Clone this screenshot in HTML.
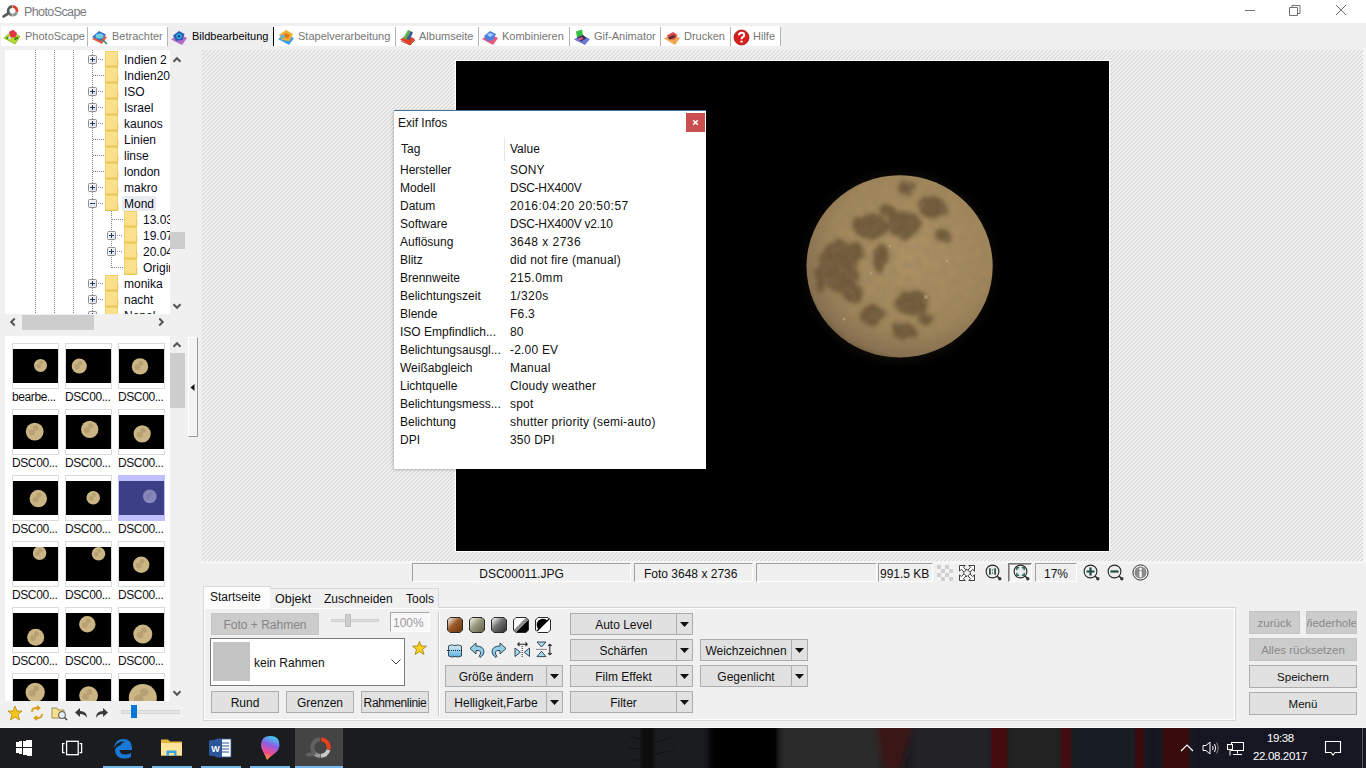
<!DOCTYPE html><html><head><meta charset="utf-8"><style>

*{margin:0;padding:0;box-sizing:border-box}
html,body{width:1366px;height:768px;overflow:hidden;background:#f0f0f0;font-family:"Liberation Sans",sans-serif;color:#000}
div,svg{position:absolute}
.t{white-space:nowrap;font-size:12px;line-height:14px}
.btn{background:#e1e1e1;border:1px solid #adadad}
.btnd{background:#cccccc;border:1px solid #bfbfbf}
.cen{text-align:center}

</style></head><body>
<div style="left:0px;top:0px;width:1366px;height:23px;background:#fff"></div><svg style="left:0;top:0" width="22" height="22" viewBox="0 0 22 22"><path d="M12.65 6.30 A4.4 4.4 0 0 1 16.75 11.84" stroke="#e23a22" stroke-width="2.7" fill="none"/><path d="M16.68 12.06 A4.4 4.4 0 0 1 12.65 15.10" stroke="#8c9690" stroke-width="2.7" fill="none"/><path d="M12.35 15.10 A4.4 4.4 0 0 1 8.69 12.90" stroke="#808080" stroke-width="2.7" fill="none"/><path d="M8.69 12.90 A4.4 4.4 0 0 1 12.35 6.30" stroke="#575b5a" stroke-width="2.7" fill="none"/><path d="M8.6 13.2 L3.6 16.4" stroke="#575b5a" stroke-width="2.8" stroke-linecap="round" fill="none"/></svg><div class="t" style="left:24px;top:5px;font-size:12.5px;color:#7a7a82;line-height:14px;letter-spacing:-0.6px">PhotoScape</div><div style="left:1245px;top:10px;width:10px;height:1px;background:#707070"></div><svg style="left:1289px;top:4px" width="12" height="12" viewBox="0 0 12 12"><path d="M0.5 3.5h8v8h-8z M3 3.5V1.5h8v8H8.5" stroke="#707070" fill="none" stroke-width="1"/></svg><svg style="left:1335px;top:4px" width="12" height="12" viewBox="0 0 12 12"><path d="M1 1L11 11M11 1L1 11" stroke="#707070" fill="none" stroke-width="1"/></svg>
<div style="left:1px;top:26px;width:779px;height:20px;background:#fff"></div><div style="left:168px;top:26px;width:105px;height:20px;background:#eeeeee"></div><div class="t" style="left:25px;top:30px;font-size:11px;color:#767676;line-height:13px">PhotoScape</div><div style="left:87px;top:27px;width:1px;height:19px;background:#b4b4b4"></div><svg style="left:3px;top:29px" width="18" height="17" viewBox="0 0 18 17"><path d="M1 9 L8 3 L17 7.5 L12 15 Z" fill="#b9d92e" stroke="#86b01c" stroke-width="0.8"/><path d="M3.5 9.5 L6 8 M11.5 10.5 L15 8.5" stroke="#2c7a1a" stroke-width="1.6"/><path d="M6 3 L10 0.8 L14 4 L12.5 8.5 L7.5 8.5 Z" fill="#e23446"/><path d="M5 8 L7 7 L8 9.5 L6 10.5Z" fill="#d8e8f0"/></svg><div class="t" style="left:112px;top:30px;font-size:11px;color:#767676;line-height:13px">Betrachter</div><div style="left:167px;top:27px;width:1px;height:19px;background:#b4b4b4"></div><svg style="left:91px;top:29px" width="18" height="17" viewBox="0 0 18 17"><path d="M1 10 L8 4.5 L16 8 L11 15Z" fill="#e8603a"/><path d="M1 8 L8 2 L15 5.5 L10 12Z" fill="#3a70c8"/><ellipse cx="8.5" cy="7" rx="4" ry="2.6" fill="#6ad0e0"/><path d="M12 11 L16 15" stroke="#2a8a8a" stroke-width="1.6"/></svg><div class="t" style="left:192px;top:30px;font-size:11px;color:#000;line-height:13px">Bildbearbeitung</div><div style="left:273px;top:27px;width:1px;height:19px;background:#000"></div><svg style="left:170px;top:29px" width="18" height="17" viewBox="0 0 18 17"><path d="M1 10.5 L9 5 L17 9 L12 16Z" fill="#b86ac8"/><path d="M3 6.5 L9 2 L14.5 5 L12.5 11 L6 12Z" fill="#2a5fb0"/><circle cx="9" cy="7.2" r="2.7" fill="#2eb0e8"/><circle cx="9" cy="7.2" r="1.2" fill="#163a70"/></svg><div class="t" style="left:298px;top:30px;font-size:11px;color:#767676;line-height:13px">Stapelverarbeitung</div><div style="left:395px;top:27px;width:1px;height:19px;background:#b4b4b4"></div><svg style="left:277px;top:29px" width="18" height="17" viewBox="0 0 18 17"><path d="M1 10 L8 5 L17 9 L12 16Z" fill="#3aa0e0"/><path d="M2 6 L9 1 L16 5 L12.5 12 L5 11Z" fill="#f0b030"/><path d="M8 4 L13 6 L11 9.5 L6.5 8Z" fill="#e07818"/><path d="M3 7 L6 5 L8 8 L5 10Z" fill="#58b8e8"/></svg><div class="t" style="left:419px;top:30px;font-size:11px;color:#767676;line-height:13px">Albumseite</div><div style="left:478px;top:27px;width:1px;height:19px;background:#b4b4b4"></div><svg style="left:399px;top:29px" width="18" height="17" viewBox="0 0 18 17"><path d="M1 10.5 L8 6 L16 10 L11 16Z" fill="#e0402a"/><path d="M4 9.5 L9 1 L11.5 2 L7.5 10.5Z" fill="#58b048"/><path d="M7.5 10 L11.5 2 L14 3.5 L10.5 11Z" fill="#3a5a90"/><path d="M2 12 L11 16 L16 11" stroke="#a02818" stroke-width="0.8" fill="none"/></svg><div class="t" style="left:502px;top:30px;font-size:11px;color:#767676;line-height:13px">Kombinieren</div><div style="left:569px;top:27px;width:1px;height:19px;background:#b4b4b4"></div><svg style="left:481px;top:29px" width="18" height="17" viewBox="0 0 18 17"><path d="M1 10 L9 5 L17 9 L12 16Z" fill="#e8587a"/><path d="M3 7 L9 2 L15 5 L12 11 L6 12Z" fill="#4f7fe0"/><path d="M6 6 L9 4 L12.5 5.5 L9.5 8Z" fill="#a8d0f8"/></svg><div class="t" style="left:594px;top:30px;font-size:11px;color:#767676;line-height:13px">Gif-Animator</div><div style="left:660px;top:27px;width:1px;height:19px;background:#b4b4b4"></div><svg style="left:573px;top:29px" width="18" height="17" viewBox="0 0 18 17"><path d="M1 10.5 L8 6 L17 10 L12 16Z" fill="#6a78d8"/><path d="M3 2.5 L9 0.5 L10 6.5 L4 8.5Z" fill="#30c040"/><path d="M4 8.5 L10 6 L13.5 9 L8 12.5Z" fill="#303040"/><path d="M5 9.5 L9 8 L10.5 10 L6.5 11.5Z" fill="#e050a0"/></svg><div class="t" style="left:684px;top:30px;font-size:11px;color:#767676;line-height:13px">Drucken</div><div style="left:730px;top:27px;width:1px;height:19px;background:#b4b4b4"></div><svg style="left:663px;top:29px" width="18" height="17" viewBox="0 0 18 17"><path d="M1 9.5 L9 5 L17 9 L12 16Z" fill="#f0a858"/><path d="M4 6.5 L10 3 L14.5 6 L11.5 10.5 L6 10.5Z" fill="#d84848"/><path d="M5 8.5 L11 6 L12.5 8 L7 10.5Z" fill="#503030"/></svg><div class="t" style="left:753px;top:30px;font-size:11px;color:#767676;line-height:13px">Hilfe</div><div style="left:780px;top:27px;width:1px;height:19px;background:#b4b4b4"></div><svg style="left:733px;top:29px" width="18" height="17" viewBox="0 0 18 17"><circle cx="8.5" cy="8.5" r="7.5" fill="#d8201c"/><circle cx="8.5" cy="8.5" r="7.5" fill="none" stroke="#a01010" stroke-width="0.8"/><path d="M6 6.3 Q6 3.8 8.6 3.8 Q11.2 3.8 11.2 6.1 Q11.2 7.6 9.4 8.4 Q8.6 8.9 8.6 10.2" stroke="#fff" stroke-width="2" fill="none"/><circle cx="8.6" cy="12.6" r="1.2" fill="#fff"/></svg>
<svg style="left:200px;top:48px" width="1166" height="518" viewBox="0 0 1166 518" shape-rendering="crispEdges"><defs><pattern id="hp" patternUnits="userSpaceOnUse" width="4" height="4"><rect x="0" y="0" width="1" height="1" fill="#d9d9d9"/><rect x="1" y="0" width="1" height="1" fill="#e2e2e2"/><rect x="2" y="0" width="1" height="1" fill="#f3f3f3"/><rect x="3" y="0" width="1" height="1" fill="#f1f1f1"/><rect x="0" y="1" width="1" height="1" fill="#e2e2e2"/><rect x="1" y="1" width="1" height="1" fill="#f3f3f3"/><rect x="2" y="1" width="1" height="1" fill="#f1f1f1"/><rect x="3" y="1" width="1" height="1" fill="#d9d9d9"/><rect x="0" y="2" width="1" height="1" fill="#f3f3f3"/><rect x="1" y="2" width="1" height="1" fill="#f1f1f1"/><rect x="2" y="2" width="1" height="1" fill="#d9d9d9"/><rect x="3" y="2" width="1" height="1" fill="#e2e2e2"/><rect x="0" y="3" width="1" height="1" fill="#f1f1f1"/><rect x="1" y="3" width="1" height="1" fill="#d9d9d9"/><rect x="2" y="3" width="1" height="1" fill="#e2e2e2"/><rect x="3" y="3" width="1" height="1" fill="#f3f3f3"/></pattern></defs><rect x="1163" y="0" width="3" height="518" fill="#f5f5f5"/><rect x="0" y="513" width="1166" height="3" fill="#f5f5f5"/><rect width="1163" height="513" fill="url(#hp)"/><rect x="0" y="0" width="1163" height="2" fill="#f0f0f0" fill-opacity="0.75"/><rect x="0" y="2" width="2" height="511" fill="#f0f0f0" fill-opacity="0.75"/></svg>
<div style="left:5px;top:50px;width:165px;height:264px;background:#fff;overflow:hidden"><div style="left:30px;top:0px;width:1px;height:264px;background-image:repeating-linear-gradient(to bottom,#808080 0 1px,transparent 1px 2px)"></div><div style="left:49px;top:0px;width:1px;height:264px;background-image:repeating-linear-gradient(to bottom,#808080 0 1px,transparent 1px 2px)"></div><div style="left:68px;top:0px;width:1px;height:264px;background-image:repeating-linear-gradient(to bottom,#808080 0 1px,transparent 1px 2px)"></div><div style="left:87px;top:0px;width:1px;height:264px;background-image:repeating-linear-gradient(to bottom,#808080 0 1px,transparent 1px 2px)"></div><div style="left:106px;top:161px;width:1px;height:57px;background-image:repeating-linear-gradient(to bottom,#808080 0 1px,transparent 1px 2px)"></div><div style="left:93px;top:9px;width:6px;height:1px;background-image:repeating-linear-gradient(to right,#808080 0 1px,transparent 1px 2px)"></div><svg style="left:100px;top:1px" width="14" height="16" viewBox="0 0 14 16"><rect x="0.5" y="0.5" width="12" height="15" fill="#fde595" stroke="#f1d06a" stroke-width="1"/><rect x="1.5" y="1.5" width="10" height="13" fill="#fbe08c"/><rect x="0" y="14.5" width="12.5" height="1.5" fill="#e8c558"/><path d="M11.5 9 L13 9 L13 15 L11.5 15" fill="#f6d877" stroke="#e6c25a" stroke-width="0.8"/></svg><div class="t" style="left:119px;top:3px;font-size:12px;color:#0a0a18">Indien 2</div><svg style="left:83px;top:5px" width="9" height="9" viewBox="0 0 9 9"><defs><linearGradient id="pg" x1="0" y1="0" x2="1" y2="1"><stop offset="0" stop-color="#fff"/><stop offset="1" stop-color="#d6dbe6"/></linearGradient></defs><rect x="0.5" y="0.5" width="8" height="8" rx="1" fill="url(#pg)" stroke="#8e8f8f"/><path d="M2 4.5h5" stroke="#1f3a5a" stroke-width="1"/><path d="M4.5 2v5" stroke="#1f3a5a" stroke-width="1"/></svg><div style="left:88px;top:25px;width:11px;height:1px;background-image:repeating-linear-gradient(to right,#808080 0 1px,transparent 1px 2px)"></div><svg style="left:100px;top:17px" width="14" height="16" viewBox="0 0 14 16"><rect x="0.5" y="0.5" width="12" height="15" fill="#fde595" stroke="#f1d06a" stroke-width="1"/><rect x="1.5" y="1.5" width="10" height="13" fill="#fbe08c"/><rect x="0" y="14.5" width="12.5" height="1.5" fill="#e8c558"/><path d="M11.5 9 L13 9 L13 15 L11.5 15" fill="#f6d877" stroke="#e6c25a" stroke-width="0.8"/></svg><div class="t" style="left:119px;top:19px;font-size:12px;color:#0a0a18">Indien2017</div><div style="left:93px;top:41px;width:6px;height:1px;background-image:repeating-linear-gradient(to right,#808080 0 1px,transparent 1px 2px)"></div><svg style="left:100px;top:33px" width="14" height="16" viewBox="0 0 14 16"><rect x="0.5" y="0.5" width="12" height="15" fill="#fde595" stroke="#f1d06a" stroke-width="1"/><rect x="1.5" y="1.5" width="10" height="13" fill="#fbe08c"/><rect x="0" y="14.5" width="12.5" height="1.5" fill="#e8c558"/><path d="M11.5 9 L13 9 L13 15 L11.5 15" fill="#f6d877" stroke="#e6c25a" stroke-width="0.8"/></svg><div class="t" style="left:119px;top:35px;font-size:12px;color:#0a0a18">ISO</div><svg style="left:83px;top:37px" width="9" height="9" viewBox="0 0 9 9"><defs><linearGradient id="pg" x1="0" y1="0" x2="1" y2="1"><stop offset="0" stop-color="#fff"/><stop offset="1" stop-color="#d6dbe6"/></linearGradient></defs><rect x="0.5" y="0.5" width="8" height="8" rx="1" fill="url(#pg)" stroke="#8e8f8f"/><path d="M2 4.5h5" stroke="#1f3a5a" stroke-width="1"/><path d="M4.5 2v5" stroke="#1f3a5a" stroke-width="1"/></svg><div style="left:93px;top:57px;width:6px;height:1px;background-image:repeating-linear-gradient(to right,#808080 0 1px,transparent 1px 2px)"></div><svg style="left:100px;top:49px" width="14" height="16" viewBox="0 0 14 16"><rect x="0.5" y="0.5" width="12" height="15" fill="#fde595" stroke="#f1d06a" stroke-width="1"/><rect x="1.5" y="1.5" width="10" height="13" fill="#fbe08c"/><rect x="0" y="14.5" width="12.5" height="1.5" fill="#e8c558"/><path d="M11.5 9 L13 9 L13 15 L11.5 15" fill="#f6d877" stroke="#e6c25a" stroke-width="0.8"/></svg><div class="t" style="left:119px;top:51px;font-size:12px;color:#0a0a18">Israel</div><svg style="left:83px;top:53px" width="9" height="9" viewBox="0 0 9 9"><defs><linearGradient id="pg" x1="0" y1="0" x2="1" y2="1"><stop offset="0" stop-color="#fff"/><stop offset="1" stop-color="#d6dbe6"/></linearGradient></defs><rect x="0.5" y="0.5" width="8" height="8" rx="1" fill="url(#pg)" stroke="#8e8f8f"/><path d="M2 4.5h5" stroke="#1f3a5a" stroke-width="1"/><path d="M4.5 2v5" stroke="#1f3a5a" stroke-width="1"/></svg><div style="left:93px;top:73px;width:6px;height:1px;background-image:repeating-linear-gradient(to right,#808080 0 1px,transparent 1px 2px)"></div><svg style="left:100px;top:65px" width="14" height="16" viewBox="0 0 14 16"><rect x="0.5" y="0.5" width="12" height="15" fill="#fde595" stroke="#f1d06a" stroke-width="1"/><rect x="1.5" y="1.5" width="10" height="13" fill="#fbe08c"/><rect x="0" y="14.5" width="12.5" height="1.5" fill="#e8c558"/><path d="M11.5 9 L13 9 L13 15 L11.5 15" fill="#f6d877" stroke="#e6c25a" stroke-width="0.8"/></svg><div class="t" style="left:119px;top:67px;font-size:12px;color:#0a0a18">kaunos</div><svg style="left:83px;top:69px" width="9" height="9" viewBox="0 0 9 9"><defs><linearGradient id="pg" x1="0" y1="0" x2="1" y2="1"><stop offset="0" stop-color="#fff"/><stop offset="1" stop-color="#d6dbe6"/></linearGradient></defs><rect x="0.5" y="0.5" width="8" height="8" rx="1" fill="url(#pg)" stroke="#8e8f8f"/><path d="M2 4.5h5" stroke="#1f3a5a" stroke-width="1"/><path d="M4.5 2v5" stroke="#1f3a5a" stroke-width="1"/></svg><div style="left:88px;top:89px;width:11px;height:1px;background-image:repeating-linear-gradient(to right,#808080 0 1px,transparent 1px 2px)"></div><svg style="left:100px;top:81px" width="14" height="16" viewBox="0 0 14 16"><rect x="0.5" y="0.5" width="12" height="15" fill="#fde595" stroke="#f1d06a" stroke-width="1"/><rect x="1.5" y="1.5" width="10" height="13" fill="#fbe08c"/><rect x="0" y="14.5" width="12.5" height="1.5" fill="#e8c558"/><path d="M11.5 9 L13 9 L13 15 L11.5 15" fill="#f6d877" stroke="#e6c25a" stroke-width="0.8"/></svg><div class="t" style="left:119px;top:83px;font-size:12px;color:#0a0a18">Linien</div><div style="left:88px;top:105px;width:11px;height:1px;background-image:repeating-linear-gradient(to right,#808080 0 1px,transparent 1px 2px)"></div><svg style="left:100px;top:97px" width="14" height="16" viewBox="0 0 14 16"><rect x="0.5" y="0.5" width="12" height="15" fill="#fde595" stroke="#f1d06a" stroke-width="1"/><rect x="1.5" y="1.5" width="10" height="13" fill="#fbe08c"/><rect x="0" y="14.5" width="12.5" height="1.5" fill="#e8c558"/><path d="M11.5 9 L13 9 L13 15 L11.5 15" fill="#f6d877" stroke="#e6c25a" stroke-width="0.8"/></svg><div class="t" style="left:119px;top:99px;font-size:12px;color:#0a0a18">linse</div><div style="left:88px;top:121px;width:11px;height:1px;background-image:repeating-linear-gradient(to right,#808080 0 1px,transparent 1px 2px)"></div><svg style="left:100px;top:113px" width="14" height="16" viewBox="0 0 14 16"><rect x="0.5" y="0.5" width="12" height="15" fill="#fde595" stroke="#f1d06a" stroke-width="1"/><rect x="1.5" y="1.5" width="10" height="13" fill="#fbe08c"/><rect x="0" y="14.5" width="12.5" height="1.5" fill="#e8c558"/><path d="M11.5 9 L13 9 L13 15 L11.5 15" fill="#f6d877" stroke="#e6c25a" stroke-width="0.8"/></svg><div class="t" style="left:119px;top:115px;font-size:12px;color:#0a0a18">london</div><div style="left:93px;top:137px;width:6px;height:1px;background-image:repeating-linear-gradient(to right,#808080 0 1px,transparent 1px 2px)"></div><svg style="left:100px;top:129px" width="14" height="16" viewBox="0 0 14 16"><rect x="0.5" y="0.5" width="12" height="15" fill="#fde595" stroke="#f1d06a" stroke-width="1"/><rect x="1.5" y="1.5" width="10" height="13" fill="#fbe08c"/><rect x="0" y="14.5" width="12.5" height="1.5" fill="#e8c558"/><path d="M11.5 9 L13 9 L13 15 L11.5 15" fill="#f6d877" stroke="#e6c25a" stroke-width="0.8"/></svg><div class="t" style="left:119px;top:131px;font-size:12px;color:#0a0a18">makro</div><svg style="left:83px;top:133px" width="9" height="9" viewBox="0 0 9 9"><defs><linearGradient id="pg" x1="0" y1="0" x2="1" y2="1"><stop offset="0" stop-color="#fff"/><stop offset="1" stop-color="#d6dbe6"/></linearGradient></defs><rect x="0.5" y="0.5" width="8" height="8" rx="1" fill="url(#pg)" stroke="#8e8f8f"/><path d="M2 4.5h5" stroke="#1f3a5a" stroke-width="1"/><path d="M4.5 2v5" stroke="#1f3a5a" stroke-width="1"/></svg><div style="left:93px;top:153px;width:6px;height:1px;background-image:repeating-linear-gradient(to right,#808080 0 1px,transparent 1px 2px)"></div><svg style="left:100px;top:145px" width="14" height="16" viewBox="0 0 14 16"><rect x="0.5" y="0.5" width="12" height="15" fill="#fde595" stroke="#f1d06a" stroke-width="1"/><rect x="1.5" y="1.5" width="10" height="13" fill="#fbe08c"/><rect x="0" y="14.5" width="12.5" height="1.5" fill="#e8c558"/><path d="M11.5 9 L13 9 L13 15 L11.5 15" fill="#f6d877" stroke="#e6c25a" stroke-width="0.8"/></svg><div style="left:117px;top:146px;width:34px;height:15px;background:#e9edf2"></div><div class="t" style="left:119px;top:147px;font-size:12px;color:#0a0a18">Mond</div><svg style="left:83px;top:149px" width="9" height="9" viewBox="0 0 9 9"><defs><linearGradient id="pg" x1="0" y1="0" x2="1" y2="1"><stop offset="0" stop-color="#fff"/><stop offset="1" stop-color="#d6dbe6"/></linearGradient></defs><rect x="0.5" y="0.5" width="8" height="8" rx="1" fill="url(#pg)" stroke="#8e8f8f"/><path d="M2 4.5h5" stroke="#1f3a5a" stroke-width="1"/></svg><div style="left:107px;top:169px;width:11px;height:1px;background-image:repeating-linear-gradient(to right,#808080 0 1px,transparent 1px 2px)"></div><svg style="left:119px;top:161px" width="14" height="16" viewBox="0 0 14 16"><rect x="0.5" y="0.5" width="12" height="15" fill="#fde595" stroke="#f1d06a" stroke-width="1"/><rect x="1.5" y="1.5" width="10" height="13" fill="#fbe08c"/><rect x="0" y="14.5" width="12.5" height="1.5" fill="#e8c558"/><path d="M11.5 9 L13 9 L13 15 L11.5 15" fill="#f6d877" stroke="#e6c25a" stroke-width="0.8"/></svg><div class="t" style="left:138px;top:163px;font-size:12px;color:#0a0a18">13.03.2017</div><div style="left:112px;top:185px;width:6px;height:1px;background-image:repeating-linear-gradient(to right,#808080 0 1px,transparent 1px 2px)"></div><svg style="left:119px;top:177px" width="14" height="16" viewBox="0 0 14 16"><rect x="0.5" y="0.5" width="12" height="15" fill="#fde595" stroke="#f1d06a" stroke-width="1"/><rect x="1.5" y="1.5" width="10" height="13" fill="#fbe08c"/><rect x="0" y="14.5" width="12.5" height="1.5" fill="#e8c558"/><path d="M11.5 9 L13 9 L13 15 L11.5 15" fill="#f6d877" stroke="#e6c25a" stroke-width="0.8"/></svg><div class="t" style="left:138px;top:179px;font-size:12px;color:#0a0a18">19.07.2016</div><svg style="left:102px;top:181px" width="9" height="9" viewBox="0 0 9 9"><defs><linearGradient id="pg" x1="0" y1="0" x2="1" y2="1"><stop offset="0" stop-color="#fff"/><stop offset="1" stop-color="#d6dbe6"/></linearGradient></defs><rect x="0.5" y="0.5" width="8" height="8" rx="1" fill="url(#pg)" stroke="#8e8f8f"/><path d="M2 4.5h5" stroke="#1f3a5a" stroke-width="1"/><path d="M4.5 2v5" stroke="#1f3a5a" stroke-width="1"/></svg><div style="left:112px;top:201px;width:6px;height:1px;background-image:repeating-linear-gradient(to right,#808080 0 1px,transparent 1px 2px)"></div><svg style="left:119px;top:193px" width="14" height="16" viewBox="0 0 14 16"><rect x="0.5" y="0.5" width="12" height="15" fill="#fde595" stroke="#f1d06a" stroke-width="1"/><rect x="1.5" y="1.5" width="10" height="13" fill="#fbe08c"/><rect x="0" y="14.5" width="12.5" height="1.5" fill="#e8c558"/><path d="M11.5 9 L13 9 L13 15 L11.5 15" fill="#f6d877" stroke="#e6c25a" stroke-width="0.8"/></svg><div class="t" style="left:138px;top:195px;font-size:12px;color:#0a0a18">20.04.2016</div><svg style="left:102px;top:197px" width="9" height="9" viewBox="0 0 9 9"><defs><linearGradient id="pg" x1="0" y1="0" x2="1" y2="1"><stop offset="0" stop-color="#fff"/><stop offset="1" stop-color="#d6dbe6"/></linearGradient></defs><rect x="0.5" y="0.5" width="8" height="8" rx="1" fill="url(#pg)" stroke="#8e8f8f"/><path d="M2 4.5h5" stroke="#1f3a5a" stroke-width="1"/><path d="M4.5 2v5" stroke="#1f3a5a" stroke-width="1"/></svg><div style="left:107px;top:217px;width:11px;height:1px;background-image:repeating-linear-gradient(to right,#808080 0 1px,transparent 1px 2px)"></div><svg style="left:119px;top:209px" width="14" height="16" viewBox="0 0 14 16"><rect x="0.5" y="0.5" width="12" height="15" fill="#fde595" stroke="#f1d06a" stroke-width="1"/><rect x="1.5" y="1.5" width="10" height="13" fill="#fbe08c"/><rect x="0" y="14.5" width="12.5" height="1.5" fill="#e8c558"/><path d="M11.5 9 L13 9 L13 15 L11.5 15" fill="#f6d877" stroke="#e6c25a" stroke-width="0.8"/></svg><div class="t" style="left:138px;top:211px;font-size:12px;color:#0a0a18">Original</div><div style="left:93px;top:233px;width:6px;height:1px;background-image:repeating-linear-gradient(to right,#808080 0 1px,transparent 1px 2px)"></div><svg style="left:100px;top:225px" width="14" height="16" viewBox="0 0 14 16"><rect x="0.5" y="0.5" width="12" height="15" fill="#fde595" stroke="#f1d06a" stroke-width="1"/><rect x="1.5" y="1.5" width="10" height="13" fill="#fbe08c"/><rect x="0" y="14.5" width="12.5" height="1.5" fill="#e8c558"/><path d="M11.5 9 L13 9 L13 15 L11.5 15" fill="#f6d877" stroke="#e6c25a" stroke-width="0.8"/></svg><div class="t" style="left:119px;top:227px;font-size:12px;color:#0a0a18">monika</div><svg style="left:83px;top:229px" width="9" height="9" viewBox="0 0 9 9"><defs><linearGradient id="pg" x1="0" y1="0" x2="1" y2="1"><stop offset="0" stop-color="#fff"/><stop offset="1" stop-color="#d6dbe6"/></linearGradient></defs><rect x="0.5" y="0.5" width="8" height="8" rx="1" fill="url(#pg)" stroke="#8e8f8f"/><path d="M2 4.5h5" stroke="#1f3a5a" stroke-width="1"/><path d="M4.5 2v5" stroke="#1f3a5a" stroke-width="1"/></svg><div style="left:93px;top:249px;width:6px;height:1px;background-image:repeating-linear-gradient(to right,#808080 0 1px,transparent 1px 2px)"></div><svg style="left:100px;top:241px" width="14" height="16" viewBox="0 0 14 16"><rect x="0.5" y="0.5" width="12" height="15" fill="#fde595" stroke="#f1d06a" stroke-width="1"/><rect x="1.5" y="1.5" width="10" height="13" fill="#fbe08c"/><rect x="0" y="14.5" width="12.5" height="1.5" fill="#e8c558"/><path d="M11.5 9 L13 9 L13 15 L11.5 15" fill="#f6d877" stroke="#e6c25a" stroke-width="0.8"/></svg><div class="t" style="left:119px;top:243px;font-size:12px;color:#0a0a18">nacht</div><svg style="left:83px;top:245px" width="9" height="9" viewBox="0 0 9 9"><defs><linearGradient id="pg" x1="0" y1="0" x2="1" y2="1"><stop offset="0" stop-color="#fff"/><stop offset="1" stop-color="#d6dbe6"/></linearGradient></defs><rect x="0.5" y="0.5" width="8" height="8" rx="1" fill="url(#pg)" stroke="#8e8f8f"/><path d="M2 4.5h5" stroke="#1f3a5a" stroke-width="1"/><path d="M4.5 2v5" stroke="#1f3a5a" stroke-width="1"/></svg><div style="left:93px;top:265px;width:6px;height:1px;background-image:repeating-linear-gradient(to right,#808080 0 1px,transparent 1px 2px)"></div><svg style="left:100px;top:257px" width="14" height="16" viewBox="0 0 14 16"><rect x="0.5" y="0.5" width="12" height="15" fill="#fde595" stroke="#f1d06a" stroke-width="1"/><rect x="1.5" y="1.5" width="10" height="13" fill="#fbe08c"/><rect x="0" y="14.5" width="12.5" height="1.5" fill="#e8c558"/><path d="M11.5 9 L13 9 L13 15 L11.5 15" fill="#f6d877" stroke="#e6c25a" stroke-width="0.8"/></svg><div class="t" style="left:119px;top:259px;font-size:12px;color:#0a0a18">Nepal</div><svg style="left:83px;top:261px" width="9" height="9" viewBox="0 0 9 9"><defs><linearGradient id="pg" x1="0" y1="0" x2="1" y2="1"><stop offset="0" stop-color="#fff"/><stop offset="1" stop-color="#d6dbe6"/></linearGradient></defs><rect x="0.5" y="0.5" width="8" height="8" rx="1" fill="url(#pg)" stroke="#8e8f8f"/><path d="M2 4.5h5" stroke="#1f3a5a" stroke-width="1"/><path d="M4.5 2v5" stroke="#1f3a5a" stroke-width="1"/></svg></div><div style="left:170px;top:50px;width:15px;height:264px;background:#f0f0f0"></div><div style="left:170px;top:232px;width:15px;height:17px;background:#cdcdcd"></div><svg style="left:171px;top:54px" width="12" height="12" viewBox="-6 -6 12 12"><path d="M-3.5 1.75 L0 -1.75 L3.5 1.75" stroke="#555555" stroke-width="2" fill="none"/></svg><svg style="left:171px;top:300px" width="12" height="12" viewBox="-6 -6 12 12"><path d="M-3.5 -1.75 L0 1.75 L3.5 -1.75" stroke="#555555" stroke-width="2" fill="none"/></svg><div style="left:5px;top:314px;width:180px;height:16px;background:#f0f0f0"></div><div style="left:22px;top:315px;width:72px;height:15px;background:#cdcdcd"></div><svg style="left:7px;top:316px" width="12" height="12" viewBox="-6 -6 12 12"><path d="M1.75 -3.5 L-1.75 0 L1.75 3.5" stroke="#555555" stroke-width="2" fill="none"/></svg><svg style="left:155px;top:316px" width="12" height="12" viewBox="-6 -6 12 12"><path d="M-1.75 -3.5 L1.75 0 L-1.75 3.5" stroke="#555555" stroke-width="2" fill="none"/></svg>
<div style="left:5px;top:336px;width:165px;height:365px;background:#fff;overflow:hidden"><div style="left:7px;top:7px;width:47px;height:46px;background:#fff;border:1px solid #dcdcdc"><div style="left:0px;top:5px;width:45px;height:34px;overflow:hidden"><svg style="left:0;top:0" width="45" height="34" viewBox="0 0 45 34"><rect width="45" height="34" fill="#000"/><circle cx="27.5" cy="16.4" r="6.5" fill="#cbb585"/><circle cx="25.55" cy="17.049999999999997" r="2.275" fill="#a08a60" opacity="0.45"/><circle cx="28.15" cy="13.799999999999999" r="1.95" fill="#a08a60" opacity="0.45"/></svg></div></div><div class="t" style="left:7px;top:54px;font-size:12px;color:#111;letter-spacing:-0.4px">bearbe...</div><div style="left:60px;top:7px;width:47px;height:46px;background:#fff;border:1px solid #dcdcdc"><div style="left:0px;top:5px;width:45px;height:34px;overflow:hidden"><svg style="left:0;top:0" width="45" height="34" viewBox="0 0 45 34"><rect width="45" height="34" fill="#000"/><circle cx="13.3" cy="17" r="7.6" fill="#cbb585"/><circle cx="11.020000000000001" cy="17.76" r="2.6599999999999997" fill="#a08a60" opacity="0.45"/><circle cx="14.06" cy="13.96" r="2.28" fill="#a08a60" opacity="0.45"/></svg></div></div><div class="t" style="left:60px;top:54px;font-size:12px;color:#111;letter-spacing:-0.4px">DSC00...</div><div style="left:113px;top:7px;width:47px;height:46px;background:#fff;border:1px solid #dcdcdc"><div style="left:0px;top:5px;width:45px;height:34px;overflow:hidden"><svg style="left:0;top:0" width="45" height="34" viewBox="0 0 45 34"><rect width="45" height="34" fill="#000"/><circle cx="21" cy="17.4" r="8.2" fill="#cbb585"/><circle cx="18.54" cy="18.22" r="2.8699999999999997" fill="#a08a60" opacity="0.45"/><circle cx="21.82" cy="14.12" r="2.4599999999999995" fill="#a08a60" opacity="0.45"/></svg></div></div><div class="t" style="left:113px;top:54px;font-size:12px;color:#111;letter-spacing:-0.4px">DSC00...</div><div style="left:7px;top:73px;width:47px;height:46px;background:#fff;border:1px solid #dcdcdc"><div style="left:0px;top:5px;width:45px;height:34px;overflow:hidden"><svg style="left:0;top:0" width="45" height="34" viewBox="0 0 45 34"><rect width="45" height="34" fill="#000"/><circle cx="21.7" cy="16.6" r="8.9" fill="#cbb585"/><circle cx="19.03" cy="17.490000000000002" r="3.1149999999999998" fill="#a08a60" opacity="0.45"/><circle cx="22.59" cy="13.040000000000001" r="2.67" fill="#a08a60" opacity="0.45"/></svg></div></div><div class="t" style="left:7px;top:120px;font-size:12px;color:#111;letter-spacing:-0.4px">DSC00...</div><div style="left:60px;top:73px;width:47px;height:46px;background:#fff;border:1px solid #dcdcdc"><div style="left:0px;top:5px;width:45px;height:34px;overflow:hidden"><svg style="left:0;top:0" width="45" height="34" viewBox="0 0 45 34"><rect width="45" height="34" fill="#000"/><circle cx="23.7" cy="14.4" r="8.7" fill="#cbb585"/><circle cx="21.09" cy="15.27" r="3.0449999999999995" fill="#a08a60" opacity="0.45"/><circle cx="24.57" cy="10.92" r="2.61" fill="#a08a60" opacity="0.45"/></svg></div></div><div class="t" style="left:60px;top:120px;font-size:12px;color:#111;letter-spacing:-0.4px">DSC00...</div><div style="left:113px;top:73px;width:47px;height:46px;background:#fff;border:1px solid #dcdcdc"><div style="left:0px;top:5px;width:45px;height:34px;overflow:hidden"><svg style="left:0;top:0" width="45" height="34" viewBox="0 0 45 34"><rect width="45" height="34" fill="#000"/><circle cx="23.2" cy="18.8" r="8.6" fill="#cbb585"/><circle cx="20.62" cy="19.66" r="3.01" fill="#a08a60" opacity="0.45"/><circle cx="24.06" cy="15.360000000000001" r="2.5799999999999996" fill="#a08a60" opacity="0.45"/></svg></div></div><div class="t" style="left:113px;top:120px;font-size:12px;color:#111;letter-spacing:-0.4px">DSC00...</div><div style="left:7px;top:139px;width:47px;height:46px;background:#fff;border:1px solid #dcdcdc"><div style="left:0px;top:5px;width:45px;height:34px;overflow:hidden"><svg style="left:0;top:0" width="45" height="34" viewBox="0 0 45 34"><rect width="45" height="34" fill="#000"/><circle cx="25.3" cy="17.6" r="8.75" fill="#cbb585"/><circle cx="22.675" cy="18.475" r="3.0625" fill="#a08a60" opacity="0.45"/><circle cx="26.175" cy="14.100000000000001" r="2.625" fill="#a08a60" opacity="0.45"/></svg></div></div><div class="t" style="left:7px;top:186px;font-size:12px;color:#111;letter-spacing:-0.4px">DSC00...</div><div style="left:60px;top:139px;width:47px;height:46px;background:#fff;border:1px solid #dcdcdc"><div style="left:0px;top:5px;width:45px;height:34px;overflow:hidden"><svg style="left:0;top:0" width="45" height="34" viewBox="0 0 45 34"><rect width="45" height="34" fill="#000"/><circle cx="27.2" cy="16.7" r="6.8" fill="#cbb585"/><circle cx="25.16" cy="17.38" r="2.38" fill="#a08a60" opacity="0.45"/><circle cx="27.88" cy="13.979999999999999" r="2.04" fill="#a08a60" opacity="0.45"/></svg></div></div><div class="t" style="left:60px;top:186px;font-size:12px;color:#111;letter-spacing:-0.4px">DSC00...</div><div style="left:113px;top:139px;width:47px;height:46px;background:#c0c0ff;border:1px solid #c0c0ff"><div style="left:0px;top:5px;width:45px;height:34px;overflow:hidden"><svg style="left:0;top:0" width="45" height="34" viewBox="0 0 45 34"><rect width="45" height="34" fill="#3b3f86"/><circle cx="30.8" cy="15.4" r="6.8" fill="#8785bb"/><circle cx="28.76" cy="16.080000000000002" r="2.38" fill="#77759f" opacity="0.45"/><circle cx="31.48" cy="12.68" r="2.04" fill="#77759f" opacity="0.45"/></svg></div></div><div class="t" style="left:113px;top:186px;font-size:12px;color:#111;letter-spacing:-0.4px">DSC00...</div><div style="left:7px;top:205px;width:47px;height:46px;background:#fff;border:1px solid #dcdcdc"><div style="left:0px;top:5px;width:45px;height:34px;overflow:hidden"><svg style="left:0;top:0" width="45" height="34" viewBox="0 0 45 34"><rect width="45" height="34" fill="#000"/><circle cx="26.6" cy="6.1" r="6.8" fill="#cbb585"/><circle cx="24.560000000000002" cy="6.779999999999999" r="2.38" fill="#a08a60" opacity="0.45"/><circle cx="27.28" cy="3.3799999999999994" r="2.04" fill="#a08a60" opacity="0.45"/></svg></div></div><div class="t" style="left:7px;top:252px;font-size:12px;color:#111;letter-spacing:-0.4px">DSC00...</div><div style="left:60px;top:205px;width:47px;height:46px;background:#fff;border:1px solid #dcdcdc"><div style="left:0px;top:5px;width:45px;height:34px;overflow:hidden"><svg style="left:0;top:0" width="45" height="34" viewBox="0 0 45 34"><rect width="45" height="34" fill="#000"/><circle cx="32.5" cy="6.8" r="6.8" fill="#cbb585"/><circle cx="30.46" cy="7.4799999999999995" r="2.38" fill="#a08a60" opacity="0.45"/><circle cx="33.18" cy="4.08" r="2.04" fill="#a08a60" opacity="0.45"/></svg></div></div><div class="t" style="left:60px;top:252px;font-size:12px;color:#111;letter-spacing:-0.4px">DSC00...</div><div style="left:113px;top:205px;width:47px;height:46px;background:#fff;border:1px solid #dcdcdc"><div style="left:0px;top:5px;width:45px;height:34px;overflow:hidden"><svg style="left:0;top:0" width="45" height="34" viewBox="0 0 45 34"><rect width="45" height="34" fill="#000"/><circle cx="22.2" cy="17.8" r="8.2" fill="#cbb585"/><circle cx="19.74" cy="18.62" r="2.8699999999999997" fill="#a08a60" opacity="0.45"/><circle cx="23.02" cy="14.520000000000001" r="2.4599999999999995" fill="#a08a60" opacity="0.45"/></svg></div></div><div class="t" style="left:113px;top:252px;font-size:12px;color:#111;letter-spacing:-0.4px">DSC00...</div><div style="left:7px;top:271px;width:47px;height:46px;background:#fff;border:1px solid #dcdcdc"><div style="left:0px;top:5px;width:45px;height:34px;overflow:hidden"><svg style="left:0;top:0" width="45" height="34" viewBox="0 0 45 34"><rect width="45" height="34" fill="#000"/><circle cx="22.7" cy="24.2" r="8.5" fill="#cbb585"/><circle cx="20.15" cy="25.05" r="2.9749999999999996" fill="#a08a60" opacity="0.45"/><circle cx="23.55" cy="20.799999999999997" r="2.55" fill="#a08a60" opacity="0.45"/></svg></div></div><div class="t" style="left:7px;top:318px;font-size:12px;color:#111;letter-spacing:-0.4px">DSC00...</div><div style="left:60px;top:271px;width:47px;height:46px;background:#fff;border:1px solid #dcdcdc"><div style="left:0px;top:5px;width:45px;height:34px;overflow:hidden"><svg style="left:0;top:0" width="45" height="34" viewBox="0 0 45 34"><rect width="45" height="34" fill="#000"/><circle cx="21.3" cy="11.2" r="8.2" fill="#cbb585"/><circle cx="18.84" cy="12.02" r="2.8699999999999997" fill="#a08a60" opacity="0.45"/><circle cx="22.12" cy="7.92" r="2.4599999999999995" fill="#a08a60" opacity="0.45"/></svg></div></div><div class="t" style="left:60px;top:318px;font-size:12px;color:#111;letter-spacing:-0.4px">DSC00...</div><div style="left:113px;top:271px;width:47px;height:46px;background:#fff;border:1px solid #dcdcdc"><div style="left:0px;top:5px;width:45px;height:34px;overflow:hidden"><svg style="left:0;top:0" width="45" height="34" viewBox="0 0 45 34"><rect width="45" height="34" fill="#000"/><circle cx="23.8" cy="21.1" r="9.5" fill="#cbb585"/><circle cx="20.95" cy="22.05" r="3.3249999999999997" fill="#a08a60" opacity="0.45"/><circle cx="24.75" cy="17.3" r="2.85" fill="#a08a60" opacity="0.45"/></svg></div></div><div class="t" style="left:113px;top:318px;font-size:12px;color:#111;letter-spacing:-0.4px">DSC00...</div><div style="left:7px;top:337px;width:47px;height:46px;background:#fff;border:1px solid #dcdcdc"><div style="left:0px;top:5px;width:45px;height:34px;overflow:hidden"><svg style="left:0;top:0" width="45" height="34" viewBox="0 0 45 34"><rect width="45" height="34" fill="#000"/><circle cx="22.2" cy="13.4" r="9.6" fill="#cbb585"/><circle cx="19.32" cy="14.36" r="3.36" fill="#a08a60" opacity="0.45"/><circle cx="23.16" cy="9.56" r="2.88" fill="#a08a60" opacity="0.45"/></svg></div></div><div class="t" style="left:7px;top:384px;font-size:12px;color:#111;letter-spacing:-0.4px">DSC00...</div><div style="left:60px;top:337px;width:47px;height:46px;background:#fff;border:1px solid #dcdcdc"><div style="left:0px;top:5px;width:45px;height:34px;overflow:hidden"><svg style="left:0;top:0" width="45" height="34" viewBox="0 0 45 34"><rect width="45" height="34" fill="#000"/><circle cx="22.6" cy="16.6" r="9.4" fill="#cbb585"/><circle cx="19.78" cy="17.540000000000003" r="3.29" fill="#a08a60" opacity="0.45"/><circle cx="23.540000000000003" cy="12.840000000000002" r="2.82" fill="#a08a60" opacity="0.45"/></svg></div></div><div class="t" style="left:60px;top:384px;font-size:12px;color:#111;letter-spacing:-0.4px">DSC00...</div><div style="left:113px;top:337px;width:47px;height:46px;background:#fff;border:1px solid #dcdcdc"><div style="left:0px;top:5px;width:45px;height:34px;overflow:hidden"><svg style="left:0;top:0" width="45" height="34" viewBox="0 0 45 34"><rect width="45" height="34" fill="#000"/><circle cx="23.8" cy="19" r="14" fill="#cbb585"/><circle cx="19.6" cy="20.4" r="4.8999999999999995" fill="#a08a60" opacity="0.45"/><circle cx="25.2" cy="13.399999999999999" r="4.2" fill="#a08a60" opacity="0.45"/></svg></div></div><div class="t" style="left:113px;top:384px;font-size:12px;color:#111;letter-spacing:-0.4px">DSC00...</div></div><div style="left:170px;top:336px;width:15px;height:365px;background:#f0f0f0"></div><div style="left:170px;top:353px;width:15px;height:55px;background:#cdcdcd"></div><svg style="left:171px;top:339px" width="12" height="12" viewBox="-6 -6 12 12"><path d="M-3.5 1.75 L0 -1.75 L3.5 1.75" stroke="#555555" stroke-width="2" fill="none"/></svg><svg style="left:171px;top:687px" width="12" height="12" viewBox="-6 -6 12 12"><path d="M-3.5 -1.75 L0 1.75 L3.5 -1.75" stroke="#555555" stroke-width="2" fill="none"/></svg><div style="left:188px;top:337px;width:10px;height:100px;background:#f3f3f3;border:1px solid;border-color:#fff #9a9a9a #9a9a9a #fff"></div><svg style="left:190px;top:384px" width="5" height="7" viewBox="0 0 5 7"><path d="M4.5 0 L0.5 3.5 L4.5 7Z" fill="#111"/></svg><svg style="left:7px;top:705px" width="16" height="16" viewBox="0 0 16 16"><path d="M8 1 L10 6 L15 6 L11 9.5 L12.5 15 L8 12 L3.5 15 L5 9.5 L1 6 L6 6Z" fill="#f5c518" stroke="#b48a10" stroke-width="0.8"/></svg><svg style="left:29px;top:705px" width="16" height="16" viewBox="0 0 16 16"><path d="M3 7 Q3 3 7 3 L10 3 M8 1 L10.5 3 L8 5" stroke="#d9a020" stroke-width="1.8" fill="none"/><path d="M13 9 Q13 13 9 13 L6 13 M8 15 L5.5 13 L8 11" stroke="#d9a020" stroke-width="1.8" fill="none"/></svg><svg style="left:51px;top:705px" width="17" height="16" viewBox="0 0 17 16"><path d="M1 3 L6 3 L7 5 L13 5 L13 13 L1 13Z" fill="#f8e08a" stroke="#8a7a40" stroke-width="0.8"/><circle cx="11" cy="10" r="3.5" fill="#e8f0f8" stroke="#505050" stroke-width="1"/><path d="M13.5 12.5 L16 15" stroke="#404040" stroke-width="1.5"/></svg><svg style="left:74px;top:706px" width="14" height="14" viewBox="0 0 14 14"><path d="M13 12 Q13 5 6 5 L6 2 L1 6.5 L6 11 L6 8 Q11 8 13 12Z" fill="#3a3a3a"/></svg><svg style="left:95px;top:706px" width="14" height="14" viewBox="0 0 14 14"><path d="M1 12 Q1 5 8 5 L8 2 L13 6.5 L8 11 L8 8 Q3 8 1 12Z" fill="#3a3a3a"/></svg><div style="left:121px;top:710px;width:59px;height:4px;background:#e6e6e6;border:1px solid #d6d6d6"></div><div style="left:131px;top:705px;width:6px;height:13px;background:#0078d7"></div>
<div style="left:455px;top:60px;width:655px;height:492px;background:#fff"></div><svg style="left:456px;top:61px" width="653" height="490" viewBox="0 0 653 490"><defs><radialGradient id="mg" cx="0.56" cy="0.42" r="0.62"><stop offset="0" stop-color="#ad9264"/><stop offset="0.7" stop-color="#a0865a"/><stop offset="0.92" stop-color="#887050"/><stop offset="1" stop-color="#68553a"/></radialGradient><radialGradient id="glow" cx="0.5" cy="0.5" r="0.5"><stop offset="0.85" stop-color="#1e1a12" stop-opacity="0.6"/><stop offset="1" stop-color="#000" stop-opacity="0"/></radialGradient><filter id="tx" x="0" y="0" width="100%" height="100%"><feTurbulence type="fractalNoise" baseFrequency="0.12" numOctaves="3" seed="7"/><feColorMatrix values="0 0 0 0 0.25  0 0 0 0 0.2  0 0 0 0 0.12  0 0 0 -1.6 1.05"/></filter><filter id="bl" x="-20%" y="-20%" width="140%" height="140%"><feTurbulence type="fractalNoise" baseFrequency="0.09" numOctaves="2" seed="3" result="n"/><feDisplacementMap in="SourceGraphic" in2="n" scale="9" result="d"/><feGaussianBlur in="d" stdDeviation="2.2"/></filter><clipPath id="mc"><ellipse cx="443.6" cy="205.4" rx="93.1" ry="91.1"/></clipPath></defs><rect width="653" height="490" fill="#000"/><circle cx="443.6" cy="206" r="104" fill="url(#glow)"/><ellipse cx="443.6" cy="205.4" rx="93.1" ry="91.1" fill="url(#mg)"/><g fill="#6c5638" opacity="0.92" filter="url(#bl)" clip-path="url(#mc)"><ellipse cx="450.8" cy="127.2" rx="10.4" ry="6.5"/><ellipse cx="476.8" cy="146.8" rx="14" ry="10.4"/><ellipse cx="448.2" cy="163.7" rx="17" ry="14"/><ellipse cx="414.3" cy="165" rx="17" ry="13"/><ellipse cx="486" cy="174" rx="8" ry="6.5"/><ellipse cx="383" cy="205.4" rx="19.5" ry="26"/><ellipse cx="424.7" cy="197.5" rx="8" ry="15.6"/><ellipse cx="456" cy="241.8" rx="17" ry="13"/><ellipse cx="448" cy="270.5" rx="12" ry="8"/><ellipse cx="417" cy="254.8" rx="13" ry="10"/><ellipse cx="396" cy="231.4" rx="10" ry="10"/><ellipse cx="364.8" cy="218.4" rx="6.5" ry="13"/><ellipse cx="432" cy="150" rx="8" ry="6"/><ellipse cx="400" cy="190" rx="8" ry="8"/><ellipse cx="470" cy="258" rx="8" ry="6"/></g><rect x="350" y="114" width="188" height="184" filter="url(#tx)" clip-path="url(#mc)" opacity="0.35"/><g fill="#c4b28c" opacity="0.5" clip-path="url(#mc)"><circle cx="470" cy="236" r="2"/><circle cx="434" cy="185" r="1.5"/><circle cx="415" cy="212" r="1.5"/><circle cx="491" cy="200" r="1.5"/><circle cx="388" cy="258" r="1.5"/></g></svg>
<div style="left:394px;top:110px;width:312px;height:359px;background:#fff;border-top:1px solid #41729a;box-shadow:-1px 1px 3px rgba(0,0,0,0.22)"><div class="t" style="left:4px;top:5px;font-size:12px;color:#111">Exif Infos</div><div style="left:292px;top:2px;width:19px;height:19px;background:#c9504e"><svg style="left:6px;top:6px" width="7" height="7" viewBox="0 0 7 7"><path d="M1.2 1.2L5.8 5.8M5.8 1.2L1.2 5.8" stroke="#fff" stroke-width="1.5"/></svg></div><div class="t" style="left:7px;top:31px;font-size:12px;color:#111">Tag</div><div class="t" style="left:116px;top:31px;font-size:12px;color:#111">Value</div><div style="left:110px;top:26px;width:1px;height:24px;background:#e6e6e6"></div><div class="t" style="left:6px;top:52px;font-size:12px;color:#111">Hersteller</div><div class="t" style="left:116px;top:52px;font-size:12px;color:#111;letter-spacing:0.2px">SONY</div><div class="t" style="left:6px;top:70px;font-size:12px;color:#111">Modell</div><div class="t" style="left:116px;top:70px;font-size:12px;color:#111;letter-spacing:-0.25px">DSC-HX400V</div><div class="t" style="left:6px;top:88px;font-size:12px;color:#111">Datum</div><div class="t" style="left:116px;top:88px;font-size:12px;color:#111;letter-spacing:0.45px">2016:04:20 20:50:57</div><div class="t" style="left:6px;top:106px;font-size:12px;color:#111">Software</div><div class="t" style="left:116px;top:106px;font-size:12px;color:#111;letter-spacing:-0.25px">DSC-HX400V v2.10</div><div class="t" style="left:6px;top:124px;font-size:12px;color:#111">Auflösung</div><div class="t" style="left:116px;top:124px;font-size:12px;color:#111;letter-spacing:0.45px">3648 x 2736</div><div class="t" style="left:6px;top:142px;font-size:12px;color:#111">Blitz</div><div class="t" style="left:116px;top:142px;font-size:12px;color:#111;letter-spacing:0.2px">did not fire (manual)</div><div class="t" style="left:6px;top:160px;font-size:12px;color:#111">Brennweite</div><div class="t" style="left:116px;top:160px;font-size:12px;color:#111;letter-spacing:0.45px">215.0mm</div><div class="t" style="left:6px;top:178px;font-size:12px;color:#111">Belichtungszeit</div><div class="t" style="left:116px;top:178px;font-size:12px;color:#111;letter-spacing:0.45px">1/320s</div><div class="t" style="left:6px;top:196px;font-size:12px;color:#111">Blende</div><div class="t" style="left:116px;top:196px;font-size:12px;color:#111;letter-spacing:0.2px">F6.3</div><div class="t" style="left:6px;top:214px;font-size:12px;color:#111">ISO Empfindlich...</div><div class="t" style="left:116px;top:214px;font-size:12px;color:#111;letter-spacing:0.2px">80</div><div class="t" style="left:6px;top:232px;font-size:12px;color:#111">Belichtungsausgl...</div><div class="t" style="left:116px;top:232px;font-size:12px;color:#111;letter-spacing:0.2px">-2.00 EV</div><div class="t" style="left:6px;top:250px;font-size:12px;color:#111">Weißabgleich</div><div class="t" style="left:116px;top:250px;font-size:12px;color:#111;letter-spacing:0.2px">Manual</div><div class="t" style="left:6px;top:268px;font-size:12px;color:#111">Lichtquelle</div><div class="t" style="left:116px;top:268px;font-size:12px;color:#111;letter-spacing:0.2px">Cloudy weather</div><div class="t" style="left:6px;top:286px;font-size:12px;color:#111">Belichtungsmess...</div><div class="t" style="left:116px;top:286px;font-size:12px;color:#111;letter-spacing:0.2px">spot</div><div class="t" style="left:6px;top:304px;font-size:12px;color:#111">Belichtung</div><div class="t" style="left:116px;top:304px;font-size:12px;color:#111;letter-spacing:0.2px">shutter priority (semi-auto)</div><div class="t" style="left:6px;top:322px;font-size:12px;color:#111">DPI</div><div class="t" style="left:116px;top:322px;font-size:12px;color:#111;letter-spacing:0.2px">350 DPI</div></div>
<div style="left:412px;top:563px;width:219px;height:19px;background:#f0f0f0;border:1px solid;border-color:#a0a0a0 #fff #fff #a0a0a0"><div class="t" style="left:0;top:3px;width:217px;text-align:center;color:#111">DSC00011.JPG</div></div><div style="left:634px;top:563px;width:119px;height:19px;background:#f0f0f0;border:1px solid;border-color:#a0a0a0 #fff #fff #a0a0a0"><div class="t" style="left:9px;top:3px;color:#111">Foto 3648 x 2736</div></div><div style="left:756px;top:563px;width:121px;height:19px;background:#f0f0f0;border:1px solid;border-color:#a0a0a0 #fff #fff #a0a0a0"></div><div style="left:878px;top:563px;width:55px;height:19px;background:#f0f0f0;border:1px solid;border-color:#a0a0a0 #fff #fff #a0a0a0"><div class="t" style="left:1px;top:3px;color:#111">991.5 KB</div></div><svg style="left:937px;top:565px" width="16" height="16" viewBox="0 0 16 16" shape-rendering="crispEdges"><rect x="0" y="0" width="4" height="4" fill="#d0d0d0"/><rect x="4" y="0" width="4" height="4" fill="#f4f4f4"/><rect x="8" y="0" width="4" height="4" fill="#d0d0d0"/><rect x="12" y="0" width="4" height="4" fill="#f4f4f4"/><rect x="0" y="4" width="4" height="4" fill="#f4f4f4"/><rect x="4" y="4" width="4" height="4" fill="#d0d0d0"/><rect x="8" y="4" width="4" height="4" fill="#f4f4f4"/><rect x="12" y="4" width="4" height="4" fill="#d0d0d0"/><rect x="0" y="8" width="4" height="4" fill="#d0d0d0"/><rect x="4" y="8" width="4" height="4" fill="#f4f4f4"/><rect x="8" y="8" width="4" height="4" fill="#d0d0d0"/><rect x="12" y="8" width="4" height="4" fill="#f4f4f4"/><rect x="0" y="12" width="4" height="4" fill="#f4f4f4"/><rect x="4" y="12" width="4" height="4" fill="#d0d0d0"/><rect x="8" y="12" width="4" height="4" fill="#f4f4f4"/><rect x="12" y="12" width="4" height="4" fill="#d0d0d0"/></svg><svg style="left:959px;top:565px" width="16" height="16" viewBox="0 0 16 16"><rect x="4.5" y="4.5" width="7" height="7" fill="none" stroke="#333" stroke-width="0.9" stroke-dasharray="1.5 1"/><path d="M0.5 0.5 L6.2 0.5 L4.4 2.3 L7.2 5.1 L5.1 7.2 L2.3 4.4 L0.5 6.2Z" transform="" fill="#fafafa" stroke="#2a2a2a" stroke-width="0.9" stroke-linejoin="miter"/><path d="M0.5 0.5 L6.2 0.5 L4.4 2.3 L7.2 5.1 L5.1 7.2 L2.3 4.4 L0.5 6.2Z" transform="translate(16,0) scale(-1,1)" fill="#fafafa" stroke="#2a2a2a" stroke-width="0.9" stroke-linejoin="miter"/><path d="M0.5 0.5 L6.2 0.5 L4.4 2.3 L7.2 5.1 L5.1 7.2 L2.3 4.4 L0.5 6.2Z" transform="translate(0,16) scale(1,-1)" fill="#fafafa" stroke="#2a2a2a" stroke-width="0.9" stroke-linejoin="miter"/><path d="M0.5 0.5 L6.2 0.5 L4.4 2.3 L7.2 5.1 L5.1 7.2 L2.3 4.4 L0.5 6.2Z" transform="translate(16,16) scale(-1,-1)" fill="#fafafa" stroke="#2a2a2a" stroke-width="0.9" stroke-linejoin="miter"/></svg><svg style="left:985.0px;top:564px" width="17" height="17" viewBox="0 0 17 17"><path d="M12 12 L14.5 14.5" stroke="#333" stroke-width="1.6"/><circle cx="14.8" cy="14.8" r="1.7" fill="#3a3a3a"/><circle cx="7.5" cy="7.5" r="6.4" fill="#ececec" stroke="#262626" stroke-width="1.1"/><rect x="4" y="4.3" width="1.8" height="6.4" fill="#34584c"/><rect x="9.2" y="4.3" width="1.8" height="6.4" fill="#34584c"/><rect x="6.9" y="5.3" width="1.2" height="1.3" fill="#34584c"/><rect x="6.9" y="8.4" width="1.2" height="1.3" fill="#34584c"/></svg><div style="left:1008px;top:563px;width:24px;height:19px;background:#f4f4f4;border:1px solid;border-color:#7a7a7a #fff #fff #7a7a7a;box-shadow:inset 1px 1px 0 #a8a8a8"></div><svg style="left:1012.5px;top:564px" width="17" height="17" viewBox="0 0 17 17"><path d="M12 12 L14.5 14.5" stroke="#333" stroke-width="1.6"/><circle cx="14.8" cy="14.8" r="1.7" fill="#3a3a3a"/><circle cx="7.5" cy="7.5" r="6.4" fill="#ececec" stroke="#262626" stroke-width="1.1"/><path d="M3.8 6.2 V3.8 H6.2 M8.8 3.8 H11.2 V6.2 M11.2 8.8 V11.2 H8.8 M6.2 11.2 H3.8 V8.8" stroke="#2a6a5e" stroke-width="1.4" fill="none"/></svg><div style="left:1035px;top:563px;width:42px;height:19px;background:#f0f0f0;border:1px solid;border-color:#a0a0a0 #fff #fff #a0a0a0"><div class="t" style="left:0;top:3px;width:40px;text-align:center;color:#111">17%</div></div><svg style="left:1082.5px;top:564px" width="17" height="17" viewBox="0 0 17 17"><path d="M12 12 L14.5 14.5" stroke="#333" stroke-width="1.6"/><circle cx="14.8" cy="14.8" r="1.7" fill="#3a3a3a"/><circle cx="7.5" cy="7.5" r="6.4" fill="#ececec" stroke="#262626" stroke-width="1.1"/><path d="M3.5 7.5h8M7.5 3.5v8" stroke="#1f4a40" stroke-width="2.2"/></svg><svg style="left:1106.5px;top:564px" width="17" height="17" viewBox="0 0 17 17"><path d="M12 12 L14.5 14.5" stroke="#333" stroke-width="1.6"/><circle cx="14.8" cy="14.8" r="1.7" fill="#3a3a3a"/><circle cx="7.5" cy="7.5" r="6.4" fill="#ececec" stroke="#262626" stroke-width="1.1"/><path d="M3.5 7.5h8" stroke="#1f4a40" stroke-width="2.2"/></svg><svg style="left:1132px;top:564px" width="17" height="17" viewBox="0 0 17 17"><circle cx="8.5" cy="8.5" r="7.6" fill="#f0f0f0" stroke="#333" stroke-width="1"/><circle cx="8.5" cy="8.5" r="6" fill="#8a8a8a"/><rect x="7.4" y="7.2" width="2.3" height="6" fill="#fff"/><circle cx="8.5" cy="5.1" r="1.3" fill="#fff"/></svg>
<div style="left:203px;top:607px;width:1033px;height:114px;background:#f0f0f0;border:1px solid #d5d5d5"><div style="left:0px;top:0px;width:1031px;height:112px;border:1px solid #fff"></div></div><div style="left:203px;top:586px;width:68px;height:23px;background:#fcfcfc;border:1px solid #d9d9d9;border-bottom:none"></div><div class="t" style="left:210px;top:590px;font-size:12px;color:#111">Startseite</div><div style="left:270px;top:588px;width:48px;height:20px;background:#f0f0f0;border:1px solid #d9d9d9;border-bottom:none;border-left:none"></div><div class="t" style="left:275px;top:592px;font-size:12.5px;color:#111">Objekt</div><div style="left:317px;top:588px;width:82px;height:20px;background:#f0f0f0;border:1px solid #d9d9d9;border-bottom:none;border-left:none"></div><div class="t" style="left:324px;top:592px;font-size:12px;color:#111">Zuschneiden</div><div style="left:398px;top:588px;width:41px;height:20px;background:#f0f0f0;border:1px solid #d9d9d9;border-bottom:none;border-left:none"></div><div class="t" style="left:406px;top:592px;font-size:12px;color:#111">Tools</div><div style="left:211px;top:613px;width:108px;height:22px;background:#cccccc;border:1px solid #c4c4c4"><div class="t" style="left:0;top:4px;width:106px;text-align:center;color:#858585">Foto + Rahmen</div></div><div style="left:331px;top:619px;width:48px;height:3px;background:#e0e0e0;border:1px solid #d0d0d0"></div><div style="left:345px;top:614px;width:6px;height:13px;background:#cdcdcd;border:1px solid #c0c0c0"></div><div style="left:390px;top:612px;width:40px;height:20px;background:#f8f8f8;border:1px solid;border-color:#a8a8a8 #fff #fff #a8a8a8"><div class="t" style="left:2px;top:3px;color:#9a9a9a">100%</div></div><div style="left:210px;top:638px;width:195px;height:48px;background:#fff;border:1px solid #7a7a7a"><div style="left:2px;top:3px;width:37px;height:39px;background:#c3c3c3"></div><div class="t" style="left:43px;top:17px;color:#111">kein Rahmen</div><svg style="left:180px;top:20px" width="10" height="6" viewBox="0 0 10 6"><path d="M0.5 0.5L5 5L9.5 0.5" stroke="#444" fill="none" stroke-width="1"/></svg></div><svg style="left:412px;top:641px" width="15" height="14" viewBox="0 0 15 14"><path d="M7.5 0.5 L9.4 5 L14.5 5.2 L10.5 8.4 L12 13.5 L7.5 10.6 L3 13.5 L4.5 8.4 L0.5 5.2 L5.6 5Z" fill="#f8d020" stroke="#a08010" stroke-width="0.8"/></svg><div style="left:211px;top:691px;width:68px;height:22px;background:#e1e1e1;border:1px solid #adadad"><div class="t" style="left:0;top:4px;width:66px;text-align:center;color:#111;">Rund</div></div><div style="left:286px;top:691px;width:68px;height:22px;background:#e1e1e1;border:1px solid #adadad"><div class="t" style="left:0;top:4px;width:66px;text-align:center;color:#111;">Grenzen</div></div><div style="left:361px;top:691px;width:68px;height:22px;background:#e1e1e1;border:1px solid #adadad"><div class="t" style="left:0;top:4px;width:66px;text-align:center;color:#111;letter-spacing:-0.35px;">Rahmenlinie</div></div><div style="left:438px;top:612px;width:1px;height:104px;background:#c8c8c8;box-shadow:1px 0 0 #fff"></div><svg style="left:447px;top:617px" width="16" height="16" viewBox="0 0 16 16"><defs><linearGradient id="gr0" x1="0" y1="0" x2="1" y2="1"><stop offset="0.05" stop-color="#fbf3ea"/><stop offset="0.45" stop-color="#9a5a28"/><stop offset="1" stop-color="#6a3208"/></linearGradient></defs><path d="M3 0.5 H13 L15.5 3 V13 L13 15.5 H3 L0.5 13 V3Z" fill="url(#gr0)" stroke="#2a2a2a" stroke-width="1"/></svg><svg style="left:469px;top:617px" width="16" height="16" viewBox="0 0 16 16"><defs><linearGradient id="gr1" x1="0" y1="0" x2="1" y2="1"><stop offset="0.05" stop-color="#f4f4e4"/><stop offset="0.45" stop-color="#9a9a80"/><stop offset="1" stop-color="#5e5e44"/></linearGradient></defs><path d="M3 0.5 H13 L15.5 3 V13 L13 15.5 H3 L0.5 13 V3Z" fill="url(#gr1)" stroke="#2a2a2a" stroke-width="1"/></svg><svg style="left:491px;top:617px" width="16" height="16" viewBox="0 0 16 16"><defs><linearGradient id="gr2" x1="0" y1="0" x2="1" y2="1"><stop offset="0.05" stop-color="#ffffff"/><stop offset="0.45" stop-color="#707070"/><stop offset="1" stop-color="#2a2a2a"/></linearGradient></defs><path d="M3 0.5 H13 L15.5 3 V13 L13 15.5 H3 L0.5 13 V3Z" fill="url(#gr2)" stroke="#2a2a2a" stroke-width="1"/></svg><svg style="left:513px;top:617px" width="16" height="16" viewBox="0 0 16 16"><clipPath id="gc3"><path d="M3 0.5 H13 L15.5 3 V13 L13 15.5 H3 L0.5 13 V3Z"/></clipPath><g clip-path="url(#gc3)"><rect width="16" height="16" fill="#fff"/><path d="M16 2 L16 16 L2 16Z" fill="#000"/><path d="M0 16 L16 0" stroke="#8a8a8a" stroke-width="3.2"/></g><path d="M3 0.5 H13 L15.5 3 V13 L13 15.5 H3 L0.5 13 V3Z" fill="none" stroke="#2a2a2a" stroke-width="1"/></svg><svg style="left:535px;top:617px" width="16" height="16" viewBox="0 0 16 16"><path d="M3 0.5 H13 L15.5 3 V13 L13 15.5 H3 L0.5 13 V3Z" fill="#fff" stroke="#2a2a2a" stroke-width="1"/><circle cx="8" cy="8" r="6.3" fill="#000"/><path d="M1 15 L15 1 L15 8 Q15 15 8 15Z" fill="#fff"/><path d="M2 14 L14.5 1.5" stroke="#000" stroke-width="1.2"/></svg><svg style="left:447px;top:642px" width="16" height="16" viewBox="0 0 16 16"><defs><linearGradient id="bl1" x1="0" y1="0" x2="0" y2="1"><stop offset="0" stop-color="#d8ecf4"/><stop offset="0.5" stop-color="#9cd0ec"/><stop offset="1" stop-color="#5ab0e0"/></linearGradient></defs><path d="M1.5 4 Q4.5 2 8 3.5 Q11 2.3 14.5 4 L14.5 14 Q11 15.8 8 14.5 Q5 15.8 1.5 14 Z" fill="url(#bl1)" stroke="#2a3a4a" stroke-width="0.9"/><path d="M0 8.5 H16" stroke="#1a1a1a" stroke-width="1" stroke-dasharray="1 1"/></svg><svg style="left:469px;top:642px" width="16" height="16" viewBox="0 0 16 16"><path d="M1 6.5 L7 1 L7 4 Q15 4 15 10 Q15 13 11 15.5 L10 14.5 Q12 12 11.5 10 Q11 8 7 8.5 L7 12 Z" fill="#92cce8" stroke="#1e3448" stroke-width="0.9" stroke-linejoin="round"/></svg><svg style="left:491px;top:642px" width="16" height="16" viewBox="0 0 16 16"><g transform="translate(16,0) scale(-1,1)"><path d="M1 6.5 L7 1 L7 4 Q15 4 15 10 Q15 13 11 15.5 L10 14.5 Q12 12 11.5 10 Q11 8 7 8.5 L7 12 Z" fill="#92cce8" stroke="#1e3448" stroke-width="0.9" stroke-linejoin="round"/></g></svg><svg style="left:512px;top:641px" width="18" height="17" viewBox="0 0 18 17"><path d="M3 7 V15.5 L8.4 11.3Z M17.5 7 V15.5 L12.3 11.3Z" fill="#a8daf0" stroke="#24384a" stroke-width="0.9" stroke-linejoin="round"/><path d="M10.2 5 V16.5" stroke="#222" stroke-width="1" stroke-dasharray="1 1"/><path d="M5.5 3.3 H15.5 M5.5 3.3 L7.5 1.5 M5.5 3.3 L7.5 5 M15.5 3.3 L13.5 1.5 M15.5 3.3 L13.5 5" stroke="#2a2a2a" stroke-width="1.1" fill="none"/></svg><svg style="left:535px;top:641px" width="17" height="17" viewBox="0 0 17 17"><path d="M2 1 H11 L6.5 6Z M2 15.6 H11 L6.5 10.3Z" fill="#a8daf0" stroke="#24384a" stroke-width="0.9" stroke-linejoin="round"/><path d="M1.5 8.4 H12" stroke="#222" stroke-width="1" stroke-dasharray="1 1"/><path d="M14.8 3 V14 M14.8 3 L13 5 M14.8 3 L16.6 5 M14.8 14 L13 12 M14.8 14 L16.6 12" stroke="#2a2a2a" stroke-width="1.1" fill="none"/></svg><div style="left:445px;top:665px;width:118px;height:22px;background:#e1e1e1;border:1px solid #adadad"><div class="t" style="left:0;top:4px;width:100px;text-align:center;color:#111">Größe ändern</div><div style="left:100px;top:0px;width:1px;height:20px;background:#adadad"></div><svg style="left:104px;top:8px" width="9" height="5" viewBox="0 0 9 5"><path d="M0 0h9L4.5 5Z" fill="#111"/></svg></div><div style="left:445px;top:691px;width:118px;height:22px;background:#e1e1e1;border:1px solid #adadad"><div class="t" style="left:0;top:4px;width:100px;text-align:center;color:#111">Helligkeit,Farbe</div><div style="left:100px;top:0px;width:1px;height:20px;background:#adadad"></div><svg style="left:104px;top:8px" width="9" height="5" viewBox="0 0 9 5"><path d="M0 0h9L4.5 5Z" fill="#111"/></svg></div><div style="left:570px;top:613px;width:123px;height:22px;background:#e1e1e1;border:1px solid #adadad"><div class="t" style="left:0;top:4px;width:105px;text-align:center;color:#111">Auto Level</div><div style="left:105px;top:0px;width:1px;height:20px;background:#adadad"></div><svg style="left:109px;top:8px" width="9" height="5" viewBox="0 0 9 5"><path d="M0 0h9L4.5 5Z" fill="#111"/></svg></div><div style="left:570px;top:639px;width:123px;height:22px;background:#e1e1e1;border:1px solid #adadad"><div class="t" style="left:0;top:4px;width:105px;text-align:center;color:#111">Schärfen</div><div style="left:105px;top:0px;width:1px;height:20px;background:#adadad"></div><svg style="left:109px;top:8px" width="9" height="5" viewBox="0 0 9 5"><path d="M0 0h9L4.5 5Z" fill="#111"/></svg></div><div style="left:570px;top:665px;width:123px;height:22px;background:#e1e1e1;border:1px solid #adadad"><div class="t" style="left:0;top:4px;width:105px;text-align:center;color:#111">Film Effekt</div><div style="left:105px;top:0px;width:1px;height:20px;background:#adadad"></div><svg style="left:109px;top:8px" width="9" height="5" viewBox="0 0 9 5"><path d="M0 0h9L4.5 5Z" fill="#111"/></svg></div><div style="left:570px;top:691px;width:123px;height:22px;background:#e1e1e1;border:1px solid #adadad"><div class="t" style="left:0;top:4px;width:105px;text-align:center;color:#111">Filter</div><div style="left:105px;top:0px;width:1px;height:20px;background:#adadad"></div><svg style="left:109px;top:8px" width="9" height="5" viewBox="0 0 9 5"><path d="M0 0h9L4.5 5Z" fill="#111"/></svg></div><div style="left:700px;top:639px;width:108px;height:22px;background:#e1e1e1;border:1px solid #adadad"><div class="t" style="left:0;top:4px;width:90px;text-align:center;color:#111">Weichzeichnen</div><div style="left:90px;top:0px;width:1px;height:20px;background:#adadad"></div><svg style="left:94px;top:8px" width="9" height="5" viewBox="0 0 9 5"><path d="M0 0h9L4.5 5Z" fill="#111"/></svg></div><div style="left:700px;top:665px;width:108px;height:22px;background:#e1e1e1;border:1px solid #adadad"><div class="t" style="left:0;top:4px;width:90px;text-align:center;color:#111">Gegenlicht</div><div style="left:90px;top:0px;width:1px;height:20px;background:#adadad"></div><svg style="left:94px;top:8px" width="9" height="5" viewBox="0 0 9 5"><path d="M0 0h9L4.5 5Z" fill="#111"/></svg></div><div style="left:1249px;top:611px;width:51px;height:23px;background:#cccccc;border:1px solid #c4c4c4"><div class="t" style="left:0;top:4px;width:49px;text-align:center;color:#8a8a8a;font-size:11.5px">zurück</div></div><div style="left:1306px;top:611px;width:51px;height:23px;background:#cccccc;border:1px solid #c4c4c4;overflow:hidden"><div class="t" style="left:-8px;top:4px;color:#8a8a8a;font-size:11.5px">Wiederholen</div></div><div style="left:1249px;top:638px;width:108px;height:23px;background:#cccccc;border:1px solid #c4c4c4"><div class="t" style="left:0;top:4px;width:106px;text-align:center;color:#8a8a8a;font-size:11.5px">Alles rücksetzen</div></div><div style="left:1249px;top:665px;width:108px;height:23px;background:#e1e1e1;border:1px solid #adadad"><div class="t" style="left:0;top:4px;width:106px;text-align:center;color:#111;font-size:11.5px">Speichern</div></div><div style="left:1249px;top:692px;width:108px;height:23px;background:#e1e1e1;border:1px solid #adadad"><div class="t" style="left:0;top:4px;width:106px;text-align:center;color:#111;font-size:11.5px">Menü</div></div>
<div style="left:0px;top:721px;width:1366px;height:7px;background:#f0f0f0"></div><div style="left:0px;top:727px;width:1366px;height:1px;background:#fafafa"></div><svg style="left:0;top:728px" width="1366" height="40" viewBox="0 0 1366 40"><defs><filter id="tbb"><feGaussianBlur stdDeviation="3"/></filter><filter id="tbb2" x="-50%" y="-10%" width="200%" height="120%"><feGaussianBlur stdDeviation="1.2"/></filter></defs><rect width="1366" height="40" fill="#1b1c20"/><g filter="url(#tbb)"><rect x="780" y="-5" width="100" height="50" fill="#2a2a2b"/><rect x="709" y="-5" width="70" height="50" fill="#050505"/><path d="M876 -5 L913 -5 L900 45 L884 45Z" fill="#3a1214"/><rect x="913" y="-5" width="78" height="50" fill="#232325"/><rect x="1007" y="-5" width="54" height="50" fill="#202124"/><rect x="1072" y="-5" width="63" height="50" fill="#171a22"/><rect x="1145" y="-5" width="18" height="50" fill="#151922"/><rect x="1189" y="-5" width="180" height="50" fill="#161920"/></g><g filter="url(#tbb2)"><rect x="641" y="-4" width="13" height="48" fill="#0c0c0c"/></g><path d="M630 8 Q640 12 645 10 M628 20 Q638 22 644 19 M656 14 Q664 12 672 9 M656 26 Q666 24 674 22 M632 32 Q640 33 645 30" stroke="#121214" stroke-width="1" fill="none"/><rect x="991" y="0" width="16" height="40" fill="#440c0e"/><rect x="1061" y="0" width="10" height="40" fill="#440c0e"/><rect x="1135" y="0" width="9" height="40" fill="#380b0c"/><rect x="1163" y="0" width="26" height="40" fill="#380b0c"/></svg><svg style="left:15px;top:739px" width="18" height="18" viewBox="0 0 18 18" shape-rendering="crispEdges"><path d="M1 2.9 L7 2.1 V8 H1Z M8 1.9 L17 0.7 V8 H8Z M1 9 H7 V14.9 L1 14.1Z M8 9 H17 V17.2 L8 16Z" fill="#fff"/></svg><svg style="left:61px;top:739px" width="22" height="18" viewBox="0 0 22 18"><rect x="5.6" y="2.3" width="11.6" height="13.4" fill="none" stroke="#fff" stroke-width="1.3"/><path d="M3.6 4.6 H1.6 V13.6 H3.6 M18.6 4.6 H20.6 V13.6 H18.6" stroke="#fff" stroke-width="1.3" fill="none"/></svg><svg style="left:112px;top:737px" width="22" height="22" viewBox="0 0 22 22"><path d="M2 11 Q3 2 11.5 2 Q20 2 20 11.5 V13 H7.5 Q8 17.5 13 17.5 Q16.5 17.5 19 16 V20 Q16 21.5 12 21.5 Q3.5 21.5 3 13 Q5 8 11 8 Q14.5 8 14.5 10 H8 Q9 5 14 5 Q8 3 4 8Z" fill="#1a78d6"/></svg><svg style="left:160px;top:738px" width="23" height="19" viewBox="0 0 23 19"><path d="M1 1.5 H8 L10 3.5 H22 V17.5 H1Z" fill="#e6b43c"/><rect x="1" y="5" width="21" height="12.5" fill="#fde49a"/><path d="M6.5 12.5 H16.5 V18 H14 V15 H9 V18 H6.5Z" fill="#3aa2dc"/></svg><svg style="left:209px;top:738px" width="23" height="20" viewBox="0 0 23 20"><rect x="8" y="1" width="14" height="18" fill="#fff" stroke="#2b579a" stroke-width="0.8"/><path d="M11 5h9M11 8h9M11 11h9M11 14h9" stroke="#2b579a" stroke-width="1.2"/><path d="M0 2.5 L13 0.5 V19.5 L0 17.5Z" fill="#2b579a"/><text x="6.5" y="13.5" font-size="9" font-family="Liberation Sans" font-weight="bold" fill="#fff" text-anchor="middle">W</text></svg><svg style="left:259px;top:735px" width="22" height="26" viewBox="0 0 22 26"><defs><linearGradient id="p3" x1="0.6" y1="0" x2="0.3" y2="1"><stop offset="0" stop-color="#38d0f0"/><stop offset="0.35" stop-color="#8a60e8"/><stop offset="0.7" stop-color="#f04a90"/><stop offset="1" stop-color="#f8a828"/></linearGradient></defs><path d="M11.5 1 Q20.5 1 20.5 10 Q20.5 15 15 19 Q10 22.5 8 25 Q6 20 4 16.5 Q2 13.5 2 10 Q2 1 11.5 1Z" fill="url(#p3)"/></svg><div style="left:295px;top:728px;width:48px;height:40px;background:#444444"></div><svg style="left:306px;top:736px" width="28" height="26" viewBox="0 0 28 26"><path d="M15.08 3.22 A8.3 8.3 0 0 1 22.62 13.23" stroke="#e8401c" stroke-width="4" fill="none"/><path d="M22.48 13.79 A8.3 8.3 0 0 1 14.79 19.79" stroke="#c8c8c8" stroke-width="4" fill="none"/><path d="M14.21 19.79 A8.3 8.3 0 0 1 7.31 15.65" stroke="#9a9a9a" stroke-width="4" fill="none"/><path d="M7.17 15.40 A8.3 8.3 0 0 1 13.92 3.22" stroke="#5e6262" stroke-width="4" fill="none"/><path d="M8.5 17 Q5 19 1.8 18.5" stroke="#5e6262" stroke-width="3.6" stroke-linecap="round" fill="none"/></svg><div style="left:103px;top:766px;width:40px;height:2px;background:#76b9ed"></div><div style="left:152px;top:766px;width:40px;height:2px;background:#76b9ed"></div><div style="left:201px;top:766px;width:40px;height:2px;background:#76b9ed"></div><div style="left:250px;top:766px;width:40px;height:2px;background:#76b9ed"></div><div style="left:295px;top:766px;width:48px;height:2px;background:#76b9ed"></div><svg style="left:1180px;top:744px" width="14" height="8" viewBox="0 0 14 8"><path d="M1 7 L7 1 L13 7" stroke="#fff" stroke-width="1.2" fill="none"/></svg><svg style="left:1202px;top:741px" width="17" height="14" viewBox="0 0 17 14"><path d="M1 4.5H4L8 1V13L4 9.5H1Z" stroke="#fff" fill="none" stroke-width="1"/><path d="M10.5 5Q12 7 10.5 9M12.5 3Q15 7 12.5 11" stroke="#fff" fill="none" stroke-width="1"/><path d="M14.5 1.5Q18 7 14.5 12.5" stroke="#888" fill="none" stroke-width="1"/></svg><svg style="left:1227px;top:741px" width="17" height="15" viewBox="0 0 17 15"><rect x="4.5" y="1.5" width="12" height="8" fill="none" stroke="#fff"/><path d="M10.5 9.5V12.5M6 13.5H15" stroke="#fff"/><rect x="0.5" y="3.5" width="5" height="5" fill="#1e1f23" stroke="#fff"/><path d="M3 8.5V14.5" stroke="#fff"/></svg><div class="t" style="left:1267px;top:732px;font-size:11.5px;color:#fff;line-height:13px;letter-spacing:-0.4px">19:38</div><div class="t" style="left:1253px;top:750px;font-size:11.5px;color:#fff;line-height:13px;letter-spacing:-0.35px">22.08.2017</div><svg style="left:1324px;top:740px" width="18" height="17" viewBox="0 0 18 17"><path d="M1.5 1.5H16.5V12.5H11L9 15L7 12.5H1.5Z" stroke="#fff" fill="none" stroke-width="1.1"/></svg><div style="left:1362px;top:728px;width:1px;height:40px;background:#5a5a5a"></div>
</body></html>
